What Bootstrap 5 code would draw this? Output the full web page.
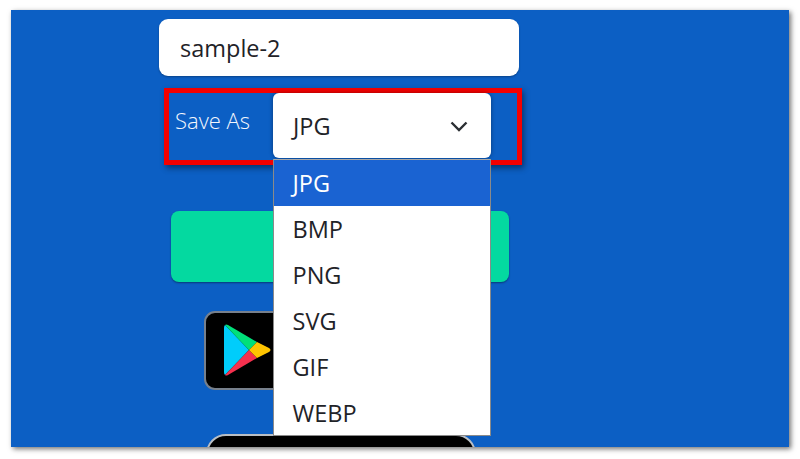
<!DOCTYPE html>
<html lang="en">

<head>
    <meta charset="UTF-8">
    <title>Save As</title>
    <link href="https://cdn.jsdelivr.net/npm/bootstrap@5.3.0/dist/css/bootstrap.min.css" rel="stylesheet">
    <style>
        html, body { height: 100%; overflow: hidden; background: #fff; }
        body { font-family: "Open Sans", "Noto Sans", sans-serif; color: #1f2328; }
        .stage {
            width: 778px; height: 437px; margin: 10px 0 0 11px; background: #0c5fc4;
            box-shadow: 2px 2px 5px rgba(0, 0, 0, .55); overflow: hidden;
        }
        .panel { width: 360px; margin-left: 148px; padding-top: 9px; }
        .name-box {
            height: 57px; padding: 0 21px; font-size: 23.5px; border-radius: 9px; border: 0; color: #1f2328;
            box-shadow: 0 1px 2px rgba(0, 0, 0, .3);
        }
        .name-box:focus { box-shadow: 0 1px 2px rgba(0, 0, 0, .3); }
        .save-row {
            width: 358px; height: 77px; margin: 12px 0 0 5px; border: 5px solid #f40000;
            box-shadow: 2px 3px 6px rgba(0, 0, 0, .45); position: relative;
        }
        .save-label { width: 104px; padding: 11px 0 0 6px; color: #f2f6fd; font-size: 22px; font-weight: 300; }
        .type-box {
            width: 218px; height: 65px; padding: 2px 23px 0 20px; background: #fff; border-radius: 6px;
            font-size: 23.5px; box-shadow: 0 0 4px rgba(0, 0, 0, .4); position: relative; z-index: 2;
        }
        .type-menu {
            position: absolute; left: 104px; top: 66px; width: 218px; min-width: 0; padding: 0; margin: 0;
            border-radius: 0; border: 1px solid #8a8a8a; border-top-color: #a8a8a8; z-index: 3;
            display: block;
        }
        .type-menu .dropdown-item {
            height: 46px; line-height: 46px; padding: 0 18.5px; font-size: 23.5px; color: #1f2328;
        }
        .type-menu li:last-child .dropdown-item { height: 45px; }
        .type-menu .dropdown-item.active { background: #1a63d2; color: #fff; }
        .go-btn {
            display: block; width: 338px; height: 71px; margin: 46px 0 0 12px; background: #04d9a0;
            border: 0; border-radius: 8px; box-shadow: 0 1px 2px rgba(0, 0, 0, .4);
        }
        .play-badge {
            width: 120px; height: 79px; margin: 29px 0 0 45px; background: #000;
            border: 2px solid #77808c; border-radius: 11px; padding: 11px 0 0 18px;
        }
        .store-badge {
            width: 270px; height: 40px; margin: 44px 0 0 47px; background: #000;
            border: 2px solid #b9bec4; border-radius: 20px 20px 0 0;
        }
    </style>
</head>

<body>
    <div class="stage">
        <div class="panel">
            <input type="text" class="form-control name-box" value="sample-2">

            <div class="save-row d-flex">
                <div class="save-label">Save As</div>
                <div class="type-box d-flex align-items-center justify-content-between">
                    <span>JPG</span>
                    <svg width="18" height="11" viewBox="0 0 18 11" fill="none" stroke="#2b2f33" stroke-width="2.4">
                        <path d="M1.5 1.5 L9 9 L16.5 1.5" />
                    </svg>
                </div>
                <ul class="dropdown-menu type-menu">
                    <li><a class="dropdown-item active" href="#">JPG</a></li>
                    <li><a class="dropdown-item" href="#">BMP</a></li>
                    <li><a class="dropdown-item" href="#">PNG</a></li>
                    <li><a class="dropdown-item" href="#">SVG</a></li>
                    <li><a class="dropdown-item" href="#">GIF</a></li>
                    <li><a class="dropdown-item" href="#">WEBP</a></li>
                </ul>
            </div>

            <button type="button" class="btn go-btn"></button>

            <div class="play-badge">
                <svg width="48" height="52" viewBox="0 0 48 52">
                    <path d="M1 1 L25 26 L1 51 Q0 50 0 48 V4 Q0 2 1 1 Z" fill="#00cdfb" />
                    <path d="M1 1 Q2 0 4 1 L33 18 L25 26 Z" fill="#00e07a" />
                    <path d="M1 51 Q2 52 4 51 L33 34 L25 26 Z" fill="#f5304e" />
                    <path d="M33 18 L45 24 Q48 26 45 28 L33 34 L25 26 Z" fill="#ffc400" />
                </svg>
            </div>
            <div class="store-badge"></div>
        </div>
    </div>

    <script src="https://cdn.jsdelivr.net/npm/bootstrap@5.3.0/dist/js/bootstrap.bundle.min.js"></script>
</body>

</html>
